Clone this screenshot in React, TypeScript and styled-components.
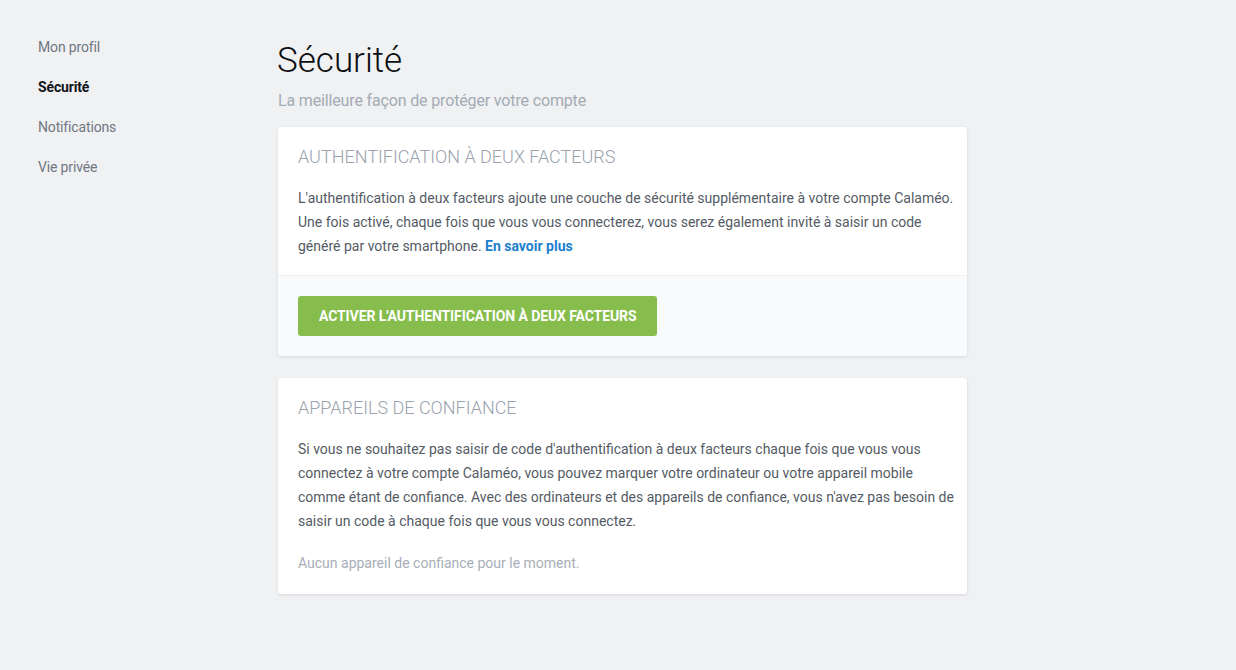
import styled, { createGlobalStyle } from "styled-components";

const GlobalStyle = createGlobalStyle`
  html, body {
    margin: 0;
    padding: 0;
    background: #f0f1f3;
    font-family: Roboto, "Liberation Sans", sans-serif;
    -webkit-font-smoothing: antialiased;
  }
`;

const Page = styled.div`
  display: flex;
  padding: 27px 0 40px 38px;
  min-height: 670px;
  box-sizing: border-box;
`;

const Sidebar = styled.nav`
  width: 240px;
  flex: 0 0 240px;
  display: flex;
  flex-direction: column;
`;

const NavItem = styled.a<{ $active?: boolean }>`
  display: block;
  height: 40px;
  line-height: 40px;
  font-size: 14px;
  letter-spacing: -0.15px;
  text-decoration: none;
  color: ${(p) => (p.$active ? "#111418" : "#6f7782")};
  font-weight: ${(p) => (p.$active ? 700 : 400)};
  cursor: pointer;
`;

const Main = styled.main`
  width: 689px;
  display: flex;
  flex-direction: column;
`;

const Title = styled.h1`
  margin: 12px 0 0 -1px;
  font-size: 35px;
  font-weight: 300;
  line-height: 44px;
  color: #0c0e11;
`;

const Subtitle = styled.p`
  margin: 8px 0 16px;
  font-size: 16px;
  letter-spacing: -0.15px;
  line-height: 20px;
  color: #a3abb5;
`;

const Card = styled.section`
  background: #ffffff;
  border-radius: 3px;
  box-shadow: 0 1px 3px rgba(20, 30, 45, 0.12);
  margin-bottom: 22px;
  overflow: hidden;
`;

const CardBody = styled.div`
  padding: 19px 10px 17px 20px;
`;

const CardTitle = styled.h2`
  margin: 0 0 18px;
  font-size: 18px;
  font-weight: 300;
  line-height: 22px;
  text-transform: uppercase;
  color: #9aa2ad;
`;

const Text = styled.p<{ $muted?: boolean }>`
  margin: 0;
  font-size: 14px;
  line-height: 24px;
  color: ${(p) => (p.$muted ? "#a7aeb7" : "#545b64")};

  & + & {
    margin-top: 18px;
    margin-bottom: 2px;
  }
`;

const MoreLink = styled.a`
  color: #1b7fcc;
  font-weight: 700;
  text-decoration: none;
`;

const CardFooter = styled.div`
  background: #f9fafb;
  border-top: 1px solid #eef0f2;
  padding: 20px;
`;

const GreenButton = styled.button`
  height: 40px;
  padding: 0 21px;
  border: none;
  border-radius: 3px;
  background: #86bd4c;
  color: #ffffff;
  font-family: Roboto, "Liberation Sans", sans-serif;
  font-size: 14px;
  font-weight: 700;
  letter-spacing: -0.1px;
  text-transform: uppercase;
  cursor: pointer;
`;

export default function App() {
  return (
    <>
      <GlobalStyle />
      <Page>
        <Sidebar>
          <NavItem>Mon profil</NavItem>
          <NavItem $active>Sécurité</NavItem>
          <NavItem>Notifications</NavItem>
          <NavItem>Vie privée</NavItem>
        </Sidebar>
        <Main>
          <Title>Sécurité</Title>
          <Subtitle>La meilleure façon de protéger votre compte</Subtitle>

          <Card>
            <CardBody>
              <CardTitle>Authentification à deux facteurs</CardTitle>
              <Text>
                L'authentification à deux facteurs ajoute une couche de sécurité
                supplémentaire à votre compte Calaméo.
                <br />
                Une fois activé, chaque fois que vous vous connecterez, vous
                serez également invité à saisir un code
                <br />
                généré par votre smartphone.{" "}
                <MoreLink href="#">En savoir plus</MoreLink>
              </Text>
            </CardBody>
            <CardFooter>
              <GreenButton>Activer l'authentification à deux facteurs</GreenButton>
            </CardFooter>
          </Card>

          <Card>
            <CardBody>
              <CardTitle>Appareils de confiance</CardTitle>
              <Text>
                Si vous ne souhaitez pas saisir de code d'authentification à deux
                facteurs chaque fois que vous vous
                <br />
                connectez à votre compte Calaméo, vous pouvez marquer votre
                ordinateur ou votre appareil mobile
                <br />
                comme étant de confiance. Avec des ordinateurs et des appareils
                de confiance, vous n'avez pas besoin de
                <br />
                saisir un code à chaque fois que vous vous connectez.
              </Text>
              <Text $muted>Aucun appareil de confiance pour le moment.</Text>
            </CardBody>
          </Card>
        </Main>
      </Page>
    </>
  );
}
